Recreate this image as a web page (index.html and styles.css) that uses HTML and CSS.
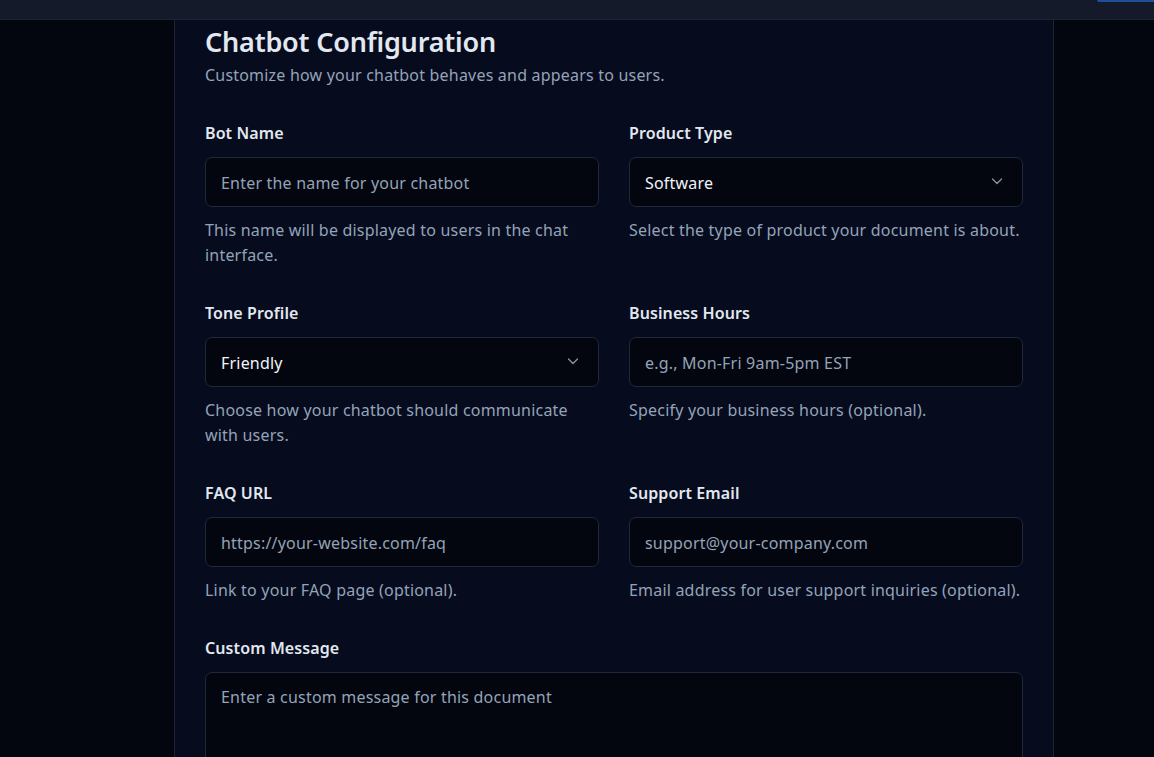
FILE: index.html
```html
<!DOCTYPE html>
<html lang="en">
<head>
<meta charset="utf-8">
<title>Chatbot Configuration</title>
<link rel="stylesheet" href="styles.css">
</head>
<body>
<header class="topbar"><span class="topbar-btn"></span></header>
<main class="page">
  <section class="card">
    <h1 class="title">Chatbot Configuration</h1>
    <p class="subtitle">Customize how your chatbot behaves and appears to users.</p>
    <div class="grid">
      <div class="field">
        <label class="label">Bot Name</label>
        <div class="input placeholder">Enter the name for your chatbot</div>
        <p class="help">This name will be displayed to users in the chat interface.</p>
      </div>
      <div class="field">
        <label class="label">Product Type</label>
        <div class="input select"><span>Software</span>
          <svg class="chev" width="14" height="14" viewBox="0 0 14 14"><path d="M2.5 5l4.5 4.5L11.5 5" fill="none" stroke="#8a93a6" stroke-width="1.3" stroke-linecap="round" stroke-linejoin="round"/></svg>
        </div>
        <p class="help">Select the type of product your document is about.</p>
      </div>
      <div class="field">
        <label class="label">Tone Profile</label>
        <div class="input select"><span>Friendly</span>
          <svg class="chev" width="14" height="14" viewBox="0 0 14 14"><path d="M2.5 5l4.5 4.5L11.5 5" fill="none" stroke="#8a93a6" stroke-width="1.3" stroke-linecap="round" stroke-linejoin="round"/></svg>
        </div>
        <p class="help">Choose how your chatbot should communicate with users.</p>
      </div>
      <div class="field">
        <label class="label">Business Hours</label>
        <div class="input placeholder">e.g., Mon-Fri 9am-5pm EST</div>
        <p class="help">Specify your business hours (optional).</p>
      </div>
      <div class="field">
        <label class="label">FAQ URL</label>
        <div class="input placeholder">https://your-website.com/faq</div>
        <p class="help">Link to your FAQ page (optional).</p>
      </div>
      <div class="field">
        <label class="label">Support Email</label>
        <div class="input placeholder">support@your-company.com</div>
        <p class="help">Email address for user support inquiries (optional).</p>
      </div>
      <div class="field wide">
        <label class="label">Custom Message</label>
        <div class="textarea placeholder">Enter a custom message for this document</div>
      </div>
    </div>
  </section>
</main>
</body>
</html>
```
FILE: styles.css
```css
* { box-sizing: border-box; }
html, body { margin: 0; padding: 0; }
body {
  background: #03060f;
  font-family: "Noto Sans", "Open Sans", sans-serif;
  color: #e2e8f0;
  height: 757px;
  overflow: hidden;
}
.topbar {
  height: 20px;
  background: #141a29;
  border-bottom: 1px solid #1c2333;
  position: relative;
}
.topbar-btn {
  position: absolute;
  right: 0;
  top: 0;
  width: 57px;
  height: 2px;
  background: #1f4f98;
  border-radius: 0 0 0 3px;
}
.page {
  display: flex;
  justify-content: center;
  padding-left: 74px;
}
.card {
  width: 880px;
  min-height: 737px;
  background: #060b1e;
  border-left: 1px solid #1c2333;
  border-right: 1px solid #1c2333;
  padding: 4px 30px 0 30px;
}
.title {
  margin: 0;
  font-size: 27px;
  font-weight: 600;
  line-height: 36px;
  color: #e2e8f0;
  letter-spacing: -0.2px;
}
.subtitle {
  margin: 3px 0 0;
  font-size: 16px;
  line-height: 24px;
  color: #94a3b8;
  letter-spacing: 0.2px;
}
.grid {
  display: grid;
  grid-template-columns: 1fr 1fr;
  column-gap: 30px;
  row-gap: 33px;
  margin-top: 34px;
}
.field { display: flex; flex-direction: column; }
.field.wide { grid-column: 1 / span 2; }
.label {
  font-size: 16px;
  font-weight: 600;
  line-height: 24px;
  color: #e2e8f0;
  margin-bottom: 12px;
  letter-spacing: 0.1px;
}
.input, .textarea {
  background: #03060f;
  border: 1px solid #1e293b;
  border-radius: 7px;
  font-size: 16px;
  color: #f1f5f9;
  letter-spacing: 0.2px;
}
.input {
  height: 50px;
  display: flex;
  align-items: center;
  padding: 2px 15px 0;
}
.select { justify-content: space-between; padding-right: 18px; }
.chev { flex: none; margin-top: -4px; }
.placeholder { color: #94a3b8; }
.textarea {
  height: 110px;
  padding: 12px 15px;
  line-height: 24px;
}
.help {
  margin: 11px 0 0;
  font-size: 16px;
  line-height: 25px;
  color: #94a3b8;
  letter-spacing: 0.2px;
}
```
